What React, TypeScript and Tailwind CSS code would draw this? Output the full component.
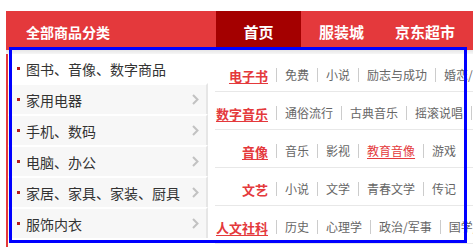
import React from "react";

type Item = { t: string; red?: boolean };
type Row = { title: string; u: boolean; items: Item[] };

const rows: Row[] = [
  { title: "电子书", u: true, items: [{ t: "免费" }, { t: "小说" }, { t: "励志与成功" }, { t: "婚恋/两性" }, { t: "外文原版" }] },
  { title: "数字音乐", u: true, items: [{ t: "通俗流行" }, { t: "古典音乐" }, { t: "摇滚说唱" }, { t: "爵士蓝调" }] },
  { title: "音像", u: true, items: [{ t: "音乐" }, { t: "影视" }, { t: "教育音像", red: true }, { t: "游戏" }, { t: "动漫" }] },
  { title: "文艺", u: false, items: [{ t: "小说" }, { t: "文学" }, { t: "青春文学" }, { t: "传记" }, { t: "艺术" }] },
  { title: "人文社科", u: true, items: [{ t: "历史" }, { t: "心理学" }, { t: "政治/军事" }, { t: "国学/古籍" }] },
];

const cats = ["图书、音像、数字商品", "家用电器", "手机、数码", "电脑、办公", "家居、家具、家装、厨具", "服饰内衣"];

function Chevron() {
  return (
    <svg width="7" height="11" viewBox="0 0 7 11" className="shrink-0">
      <path d="M1 1 L5.5 5.5 L1 10" fill="none" stroke="#c2c2c2" strokeWidth="2" />
    </svg>
  );
}

export default function App() {
  return (
    <div
      className="relative w-[473px] h-[247px] overflow-hidden bg-white"
      style={{ fontFamily: '"Noto Sans CJK SC", "Noto Sans", sans-serif' }}
    >
      <div className="pt-[11px] pl-[6px] flex flex-col h-full">
        <div className="flex h-[39px] shrink-0 bg-[#e4393c] text-white font-bold whitespace-nowrap">
          <div className="w-[210px] flex items-center pl-[20px] pt-[2px] text-[14px] leading-none">全部商品分类</div>
          <div className="w-[85px] bg-[#a40000] flex items-center justify-center pt-[2px] text-[15px] leading-none">首页</div>
          <div className="ml-[18px] flex items-center pt-[2px] text-[15px] leading-none">服装城</div>
          <div className="ml-[31px] flex items-center pt-[2px] text-[15px] leading-none">京东超市</div>
        </div>
        <div className="h-[4px] shrink-0 bg-gradient-to-b from-[#e6e6e6] to-[#f6f6f6]" />
        <div className="flex flex-1 min-h-0">
          <div className="w-[202px] shrink-0 border-l-2 border-[#e4393c] flex flex-col">
            {cats.map((c, i) =>
              i === 0 ? (
                <div key={c} className="h-[29px] flex items-center bg-white text-[14px] text-[#333] leading-none">
                  <span className="ml-[9px] w-[3px] h-[3px] bg-[#b61d1d] shrink-0" />
                  <span className="ml-[6px] whitespace-nowrap">{c}</span>
                </div>
              ) : (
                <div
                  key={c}
                  className="h-[31px] flex items-center bg-[#f7f7f7] border-t-2 border-t-white border-r-2 border-r-[#e6e6e6] text-[14px] text-[#333] leading-none"
                >
                  <span className="ml-[9px] w-[3px] h-[3px] bg-[#b61d1d] shrink-0" />
                  <span className="ml-[6px] whitespace-nowrap flex-1">{c}</span>
                  <span className="mr-[7px] flex items-center">
                    <Chevron />
                  </span>
                </div>
              )
            )}
          </div>
          <div className="flex-1 min-w-0 pl-[7px]">
            {rows.map((r) => (
              <div
                key={r.title}
                className="h-[38px] flex items-center pt-[5px] border-b border-[#e8e8e8] whitespace-nowrap w-[400px]"
              >
                <span
                  className={
                    "w-[53px] shrink-0 text-right text-[13px] font-bold text-[#e4393c] leading-none" +
                    (r.u ? " underline underline-offset-2" : "")
                  }
                >
                  {r.title}
                </span>
                {r.items.map((it, j) => (
                  <React.Fragment key={j}>
                    <span className="mx-2 w-px h-[14px] bg-[#cccccc] shrink-0" />
                    <span
                      className={
                        "shrink-0 text-[12px] leading-none " +
                        (it.red ? "text-[#e4393c] underline underline-offset-2" : "text-[#666]")
                      }
                    >
                      {it.t}
                    </span>
                  </React.Fragment>
                ))}
              </div>
            ))}
          </div>
        </div>
      </div>
      <div className="pointer-events-none absolute left-[9px] top-[47px] w-[458px] h-[196px] border-[3px] border-[#0000ff]" />
    </div>
  );
}
